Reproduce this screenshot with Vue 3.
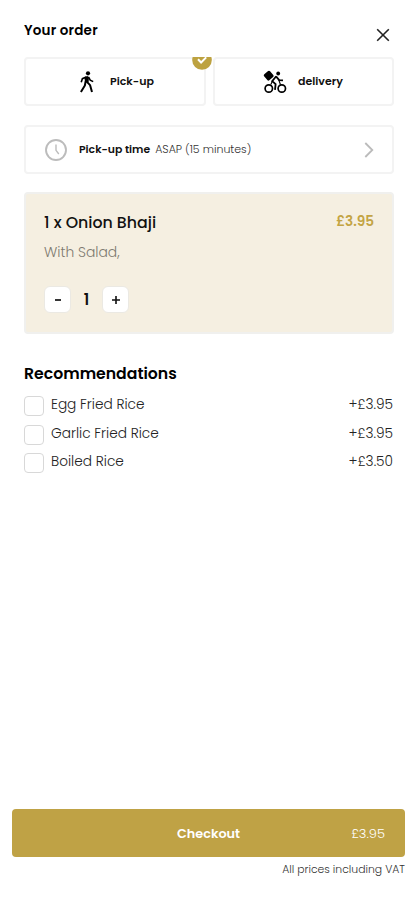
<script setup>
import { ref } from 'vue'

const method = ref('pickup')
const quantity = ref(1)
const extras = ref([
  { name: 'Egg Fried Rice', price: '+£3.95', key: 'egg', checked: false },
  { name: 'Garlic Fried Rice', price: '+£3.95', key: 'garlic', checked: false },
  { name: 'Boiled Rice', price: '+£3.50', key: 'boiled', checked: false },
])
</script>

<template>
  <main class="order">
    <header class="top">
      <h1 class="title">Your order</h1>
      <button class="close" aria-label="Close">
        <svg width="14" height="14" viewBox="0 0 14 14"><path d="M1.2 1.2 12.8 12.8M12.8 1.2 1.2 12.8" fill="none" stroke="#222" stroke-width="1.6" /></svg>
      </button>
    </header>

    <section class="methods">
      <button class="method pickup" @click="method = 'pickup'">
        <svg class="walk" width="16" height="22" viewBox="0 0 16 22">
          <circle cx="9" cy="2.3" r="2.1" fill="#000" />
          <path d="M5.2 6.2 8.2 5 10 6.1 9.6 11 6.2 11.2z" fill="#000" />
          <path d="M7.3 5.9 3.4 7.7 2.2 11.2M9.6 6 11.2 9.1 14.2 10.6" fill="none" stroke="#000" stroke-width="1.6" />
          <path d="M6.7 10 5.9 14.5 1.9 21M8 10.8 11.1 14.2 13 21" fill="none" stroke="#000" stroke-width="2" />
        </svg>
        <span class="method-name">Pick-up</span>
      </button>
      <button class="method deliver" @click="method = 'delivery'">
        <svg class="bike" width="24" height="24" viewBox="0 0 24 24">
          <rect x="1.8" y="1.8" width="7.8" height="7.8" rx="1.4" transform="rotate(-40 5.7 5.7)" fill="#000" />
          <circle cx="15.2" cy="3.5" r="1.9" fill="#000" />
          <g fill="none" stroke="#000">
            <circle cx="5.8" cy="18.5" r="3.7" stroke-width="1.7" />
            <circle cx="18.8" cy="18.5" r="3.7" stroke-width="1.7" />
            <path d="M13.2 6.3 9.2 11.2 12.6 14.1 12 19.8M13 6.4 16.2 10.1 20 10.4" stroke-width="1.8" />
            <path d="M9.3 11.5 7.8 14.6M15.8 10 17.5 14.8" stroke-width="1.1" />
          </g>
        </svg>
        <span class="method-name">delivery</span>
      </button>
      <span class="badge-clip">
        <svg width="20" height="13" viewBox="0 0 20 13"><circle cx="10" cy="3" r="9.8" fill="#bda240" /><path d="M6 2.2 9.1 5.5 14.2 0.4" fill="none" stroke="#fff" stroke-width="2" /></svg>
      </span>
    </section>

    <button class="time">
      <svg class="clock" width="24" height="24" viewBox="0 0 24 24"><g fill="none" stroke="#bcbcbc"><circle cx="12" cy="12" r="10" stroke-width="1.9" /><path d="M12 6.5V12.3L14.8 16" stroke-width="1.4" /></g></svg>
      <strong class="time-label">Pick-up time</strong>
      <span class="time-value">ASAP (15 minutes)</span>
      <svg class="chevron" width="10" height="16" viewBox="0 0 10 16"><path d="M1.3 1 8.3 8 1.3 15" fill="none" stroke="#bbb" stroke-width="1.8" /></svg>
    </button>

    <section class="item">
      <div class="item-head">
        <h2 class="item-name">1 x Onion Bhaji</h2>
        <span class="item-price">£3.95</span>
      </div>
      <p class="item-note">With Salad,</p>
      <div class="stepper">
        <button class="step" aria-label="Less" @click="quantity = Math.max(1, quantity - 1)">
          <svg width="8" height="8" viewBox="0 0 8 8"><path d="M1 4H7" stroke="#111" stroke-width="1.7" /></svg>
        </button>
        <span class="count">{{ quantity }}</span>
        <button class="step" aria-label="More" @click="quantity++">
          <svg width="8" height="8" viewBox="0 0 8 8"><path d="M0 4H8M4 0V8" stroke="#111" stroke-width="1.6" /></svg>
        </button>
      </div>
    </section>

    <section class="extras">
      <h2 class="extras-title">Recommendations</h2>
      <label v-for="extra in extras" :key="extra.key" class="extra">
        <input v-model="extra.checked" class="box" type="checkbox" />
        <span class="extra-name">{{ extra.name }}</span>
        <span class="extra-price">{{ extra.price }}</span>
      </label>
    </section>

    <footer class="bottom">
      <button class="checkout">
        <span class="checkout-label">Checkout</span>
        <span class="checkout-total">£3.95</span>
      </button>
      <p class="vat">All prices including VAT</p>
    </footer>
  </main>
</template>

<style>
body {
  background: #fff;
}
</style>

<style scoped>
.order {
  box-sizing: border-box;
  height: 900px;
  padding: 21px 12px 0;
  display: flex;
  flex-direction: column;
  font-family: Poppins, Inter, "Liberation Sans", sans-serif;
  color: #111;
}
.order * {
  box-sizing: border-box;
  white-space: nowrap;
}
button {
  font: inherit;
  color: inherit;
  padding: 0;
  border: 0;
  background: none;
}
h1, h2, p {
  margin: 0;
}
svg {
  display: block;
  flex: none;
}
.top {
  display: flex;
  justify-content: space-between;
  height: 36px;
  padding: 0 15px 0 12px;
}
.title {
  font-size: 13.5px;
  line-height: 20px;
  font-weight: 600;
  letter-spacing: 0.2px;
  color: #000;
}
.close {
  height: 14px;
  margin-top: 7px;
}
.methods {
  position: relative;
  display: grid;
  grid-template-columns: 182px 181px;
  gap: 7px;
  height: 49px;
  margin: 0 11px 0 12px;
}
.method {
  display: flex;
  align-items: center;
  border: 2px solid #f3f3f3;
  border-radius: 4px;
}
.pickup {
  padding-left: 53px;
  gap: 15px;
}
.deliver {
  padding-left: 48px;
  gap: 11px;
}
.method-name {
  font-size: 11px;
  font-weight: 600;
  line-height: 16px;
  margin-top: -1px;
}
.badge-clip {
  position: absolute;
  left: 168px;
  top: 0;
}
.time {
  display: flex;
  align-items: center;
  height: 49px;
  margin: 19px 11px 0 12px;
  padding: 0 18px;
  border: 2px solid #f3f3f3;
  border-radius: 4px;
}
.time-label {
  margin-left: 11px;
  font-size: 10.85px;
  font-weight: 600;
}
.time-value {
  margin-left: 5px;
  font-size: 11px;
  font-weight: 300;
  color: #333;
}
.chevron {
  margin-left: auto;
}
.item {
  height: 142px;
  margin: 18px 11px 0 12px;
  padding: 17px 18px 0;
  border: 2px solid #f0f0ee;
  border-radius: 4px;
  background: #f5efe1;
}
.item-head {
  display: flex;
  justify-content: space-between;
}
.item-name {
  font-size: 15.8px;
  line-height: 24px;
  font-weight: 500;
}
.item-price {
  font-size: 13.6px;
  line-height: 22px;
  font-weight: 600;
  color: #c3a444;
}
.item-note {
  margin-top: 7px;
  font-size: 13.9px;
  line-height: 20px;
  font-weight: 300;
  color: #7d7a70;
}
.stepper {
  display: flex;
  align-items: center;
  margin-top: 24px;
}
.step {
  width: 27px;
  height: 27px;
  display: grid;
  place-items: center;
  border: 1px solid #ebe9e3;
  border-radius: 6px;
  background: #fff;
}
.count {
  width: 31px;
  text-align: center;
  font-size: 15px;
  line-height: 20px;
  font-weight: 600;
}
.extras {
  margin: 28px 12px 0;
}
.extras-title {
  font-size: 15.7px;
  line-height: 24px;
  font-weight: 600;
  margin-bottom: 5px;
  color: #000;
}
.extra {
  display: flex;
  align-items: center;
  height: 28.5px;
}
.box {
  appearance: none;
  width: 20px;
  height: 20px;
  margin: 2px 7px 0 0;
  border: 1.5px solid #d8d8d8;
  border-radius: 4px;
  background: #fff;
}
.box:checked {
  background: #bda240;
}
.extra-name,
.extra-price {
  font-size: 13.7px;
  line-height: 20px;
  font-weight: 300;
  color: #222;
}
.extra-price {
  margin-left: auto;
}
.bottom {
  margin-top: auto;
  height: 91px;
}
.checkout {
  display: grid;
  grid-template-columns: 1fr auto 1fr;
  align-items: center;
  width: 393px;
  height: 48px;
  padding: 1px 20px 0;
  border-radius: 4px;
  background: #bfa245;
  color: #fff;
}
.checkout-label {
  grid-column: 2;
  font-size: 12.8px;
  font-weight: 600;
}
.checkout-total {
  justify-self: end;
  font-size: 13px;
  font-weight: 300;
}
.vat {
  margin-top: 5px;
  text-align: right;
  font-size: 10.85px;
  line-height: 16px;
  font-weight: 300;
  color: #333;
}
</style>
